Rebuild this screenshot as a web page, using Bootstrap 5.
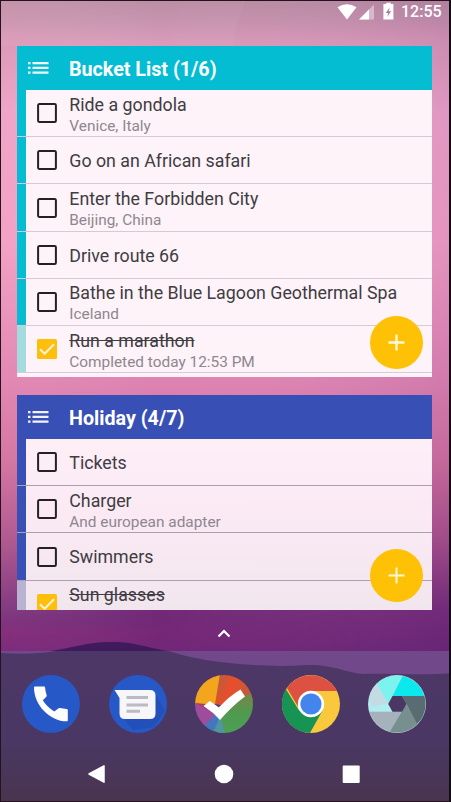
<!DOCTYPE html>
<html lang="en">
<head>
<meta charset="utf-8">
<meta name="viewport" content="width=device-width, initial-scale=1">
<title>Home screen</title>
<link href="https://cdn.jsdelivr.net/npm/bootstrap@5.3.0/dist/css/bootstrap.min.css" rel="stylesheet">
<style>
body{font-family:Roboto,sans-serif;background:#000;overflow:hidden}
.phone{width:451px;height:802px}
.wallpaper{position:absolute;inset:0}
.status{height:22px;padding:2px 10px 0 0;font-size:16px;font-weight:500;line-height:20px}
.status .clock{width:40px;text-align:right;white-space:nowrap}
.todo{margin:0 19px 0 17px;overflow:hidden}
.todo-bucket{margin-top:24px;height:331px;--tone:#04bdd3;--faded:#a3dbdf;--rule:#d9c9d6;background:#fef3f8}
.todo-holiday{margin-top:18px;height:215px;--tone:#3850b5;--faded:#b7b3d1;--rule:#aaa0ae;background:linear-gradient(#feeff7 45px,#fbeaf4 110px,#f2e6ee 215px)}
.todo-head{height:44px;background:var(--tone);padding-left:11px;color:#fff}
.todo-head h2{font-size:19.7px;font-weight:700;margin:3px 0 0 20px;line-height:24px;white-space:nowrap}
.todo-row{height:47.25px;border-bottom:1px solid var(--rule)}
.todo-head + .todo-row{height:47px}
.stripe{width:8.6px;background:var(--tone)}
.is-done .stripe{background:var(--faded)}
.tick{width:20px;height:20px;margin:.4px 12px 0 11.7px}
.label{font-size:17.8px;line-height:23px;color:#403c43;white-space:nowrap;margin-top:1px}
.note{font-size:15.4px;line-height:21px;color:#8f868f;white-space:nowrap}
.two-line{padding-top:2px}
.fab{position:absolute;right:9px;bottom:8px;width:53px;height:53px;background:#ffc105}
.drawer{margin-top:19px;height:11px}
.dock{margin-top:35px;padding:0 25px 0 22px}
.navkeys{margin-top:31px;padding:0 90px 0 87px}
</style>
<script src="https://cdn.jsdelivr.net/npm/bootstrap@5.3.0/dist/js/bootstrap.bundle.min.js"></script>
</head>
<body>
<main class="phone position-relative overflow-hidden">
<svg class="wallpaper" width="451" height="802" viewBox="0 0 451 802">
  <defs>
    <linearGradient id="sky" x2="0" y2="1">
      <stop offset="0" stop-color="#b98aa2"/><stop offset=".025" stop-color="#c48fab"/><stop offset=".05" stop-color="#d796b6"/><stop offset=".14" stop-color="#eda3c8"/><stop offset=".3" stop-color="#f29fc5"/>
      <stop offset=".47" stop-color="#de83b2"/><stop offset=".57" stop-color="#d0709f"/><stop offset=".67" stop-color="#a84f8b"/><stop offset=".76" stop-color="#732a78"/><stop offset=".812" stop-color="#6a2375"/><stop offset="1" stop-color="#592370"/>
    </linearGradient>
    <linearGradient id="side" x2="1" y2="0"><stop offset="0" stop-color="#ffb3c0" stop-opacity=".12"/><stop offset=".35" stop-color="#fff" stop-opacity="0"/><stop offset="1" stop-color="#642a80" stop-opacity=".1"/></linearGradient>
    <linearGradient id="glow" x2="0" y2="1"><stop offset="0" stop-color="#6f2a77" stop-opacity="0"/><stop offset=".5" stop-color="#8a2a78" stop-opacity=".55"/><stop offset="1" stop-color="#7c2b7c" stop-opacity=".8"/></linearGradient>
    <linearGradient id="dusk" x2="0" y2="1"><stop offset="0" stop-color="#4d3767"/><stop offset=".6" stop-color="#4a3763"/><stop offset="1" stop-color="#49354f"/></linearGradient>
    <linearGradient id="fade" x2="1" y2="0"><stop offset="0" stop-color="#fff"/><stop offset=".8" stop-color="#fff" stop-opacity="0"/></linearGradient>
    <mask id="leftside"><rect width="451" height="802" fill="url(#fade)"/></mask>
  </defs>
  <rect width="451" height="802" fill="url(#sky)"/>
  <rect width="451" height="802" fill="url(#side)"/>
  <path d="M0 0H246Q236 22 233 46H0Z" fill="#fff" opacity=".04"/>
  <rect y="611" width="451" height="40" fill="url(#glow)" mask="url(#leftside)"/>
  <path d="M50 651C75 648 85 642 112 642C136 642 147 648 168 651Z" fill="#3f1b5c"/>
  <rect y="651" width="451" height="151" fill="url(#dusk)"/>
  <path d="M0 651H55Q35 655 0 653Z" fill="#71488a"/>
  <path d="M168 651H451V673C422 676 395 673 364 674C342 672 333 664 306 665C265 668 215 663 186 656Z" fill="#71488a"/>
  <path d="M0 .5H451M.5 0V802M0 801.5H451" stroke="#26121d"/>
  <path d="M450 0V802" stroke="#120c14" stroke-width="2"/>
</svg>
<div class="position-relative d-flex flex-column">
  <header class="status d-flex justify-content-end align-items-center text-white">
    <svg width="60" height="22" viewBox="337 0 60 22" fill="#fff">
      <path d="M337.5 6.2Q347 0.5 356.5 6.2L347 18.5Z"/>
      <path d="M374 3.5V18.5H359Z" opacity=".4"/><path d="M369 8.5V18.5H359Z"/>
      <path d="M386.2 3V1.8H390.8V3H393.4V18.6H383.4V3Z"/><path d="M389.8 6.3L385.7 12H388.2L387.2 16L391.2 10.2H388.7Z" fill="#aa819a"/>
    </svg>
    <span class="clock ms-1">12:55</span>
  </header>

  <section class="todo todo-bucket position-relative">
    <div class="todo-head d-flex align-items-center">
      <svg width="21" height="14" viewBox="0 0 21 14" fill="#fff" fill-opacity=".93"><path d="M0 1h2.5v2.3H0zM0 5.7h2.5V8H0zM0 10.4h2.5v2.3H0zM4.5 1h16v2.3h-16zM4.5 5.7h16V8h-16zM4.5 10.4h16v2.3h-16z"/></svg>
      <h2>Bucket List (1/6)</h2>
    </div>
    <div class="todo-row d-flex align-items-center"><span class="stripe align-self-stretch"></span><svg class="tick" viewBox="0 0 20 20"><rect x="1.1" y="1.1" width="17.8" height="17.8" rx="1.2" fill="none" stroke="#242126" stroke-width="2"/></svg><div class="two-line"><div class="label">Ride a gondola</div><div class="note">Venice, Italy</div></div></div>
    <div class="todo-row d-flex align-items-center"><span class="stripe align-self-stretch"></span><svg class="tick" viewBox="0 0 20 20"><rect x="1.1" y="1.1" width="17.8" height="17.8" rx="1.2" fill="none" stroke="#242126" stroke-width="2"/></svg><div class="label">Go on an African safari</div></div>
    <div class="todo-row d-flex align-items-center"><span class="stripe align-self-stretch"></span><svg class="tick" viewBox="0 0 20 20"><rect x="1.1" y="1.1" width="17.8" height="17.8" rx="1.2" fill="none" stroke="#242126" stroke-width="2"/></svg><div class="two-line"><div class="label">Enter the Forbidden City</div><div class="note">Beijing, China</div></div></div>
    <div class="todo-row d-flex align-items-center"><span class="stripe align-self-stretch"></span><svg class="tick" viewBox="0 0 20 20"><rect x="1.1" y="1.1" width="17.8" height="17.8" rx="1.2" fill="none" stroke="#242126" stroke-width="2"/></svg><div class="label">Drive route 66</div></div>
    <div class="todo-row d-flex align-items-center"><span class="stripe align-self-stretch"></span><svg class="tick" viewBox="0 0 20 20"><rect x="1.1" y="1.1" width="17.8" height="17.8" rx="1.2" fill="none" stroke="#242126" stroke-width="2"/></svg><div class="two-line"><div class="label">Bathe in the Blue Lagoon Geothermal Spa</div><div class="note">Iceland</div></div></div>
    <div class="todo-row is-done d-flex align-items-center"><span class="stripe align-self-stretch"></span><svg class="tick" viewBox="0 0 20 20"><rect width="20" height="20" rx="1.5" fill="#fdbf0c"/><path d="M3 10.3L7.6 14.8L17 5.3" fill="none" stroke="#fff3d5" stroke-width="2"/></svg><div class="two-line"><div class="label text-decoration-line-through">Run a marathon</div><div class="note">Completed today 12:53 PM</div></div></div>
    <div class="fab rounded-circle d-flex align-items-center justify-content-center"><svg width="17" height="17" viewBox="0 0 17 17"><path d="M8.5.5v16M.5 8.5h16" stroke="#fff9dc" stroke-width="2.3"/></svg></div>
  </section>

  <section class="todo todo-holiday position-relative">
    <div class="todo-head d-flex align-items-center">
      <svg width="21" height="14" viewBox="0 0 21 14" fill="#fff" fill-opacity=".93"><path d="M0 1h2.5v2.3H0zM0 5.7h2.5V8H0zM0 10.4h2.5v2.3H0zM4.5 1h16v2.3h-16zM4.5 5.7h16V8h-16zM4.5 10.4h16v2.3h-16z"/></svg>
      <h2>Holiday (4/7)</h2>
    </div>
    <div class="todo-row d-flex align-items-center"><span class="stripe align-self-stretch"></span><svg class="tick" viewBox="0 0 20 20"><rect x="1.1" y="1.1" width="17.8" height="17.8" rx="1.2" fill="none" stroke="#242126" stroke-width="2"/></svg><div class="label">Tickets</div></div>
    <div class="todo-row d-flex align-items-center"><span class="stripe align-self-stretch"></span><svg class="tick" viewBox="0 0 20 20"><rect x="1.1" y="1.1" width="17.8" height="17.8" rx="1.2" fill="none" stroke="#242126" stroke-width="2"/></svg><div class="two-line"><div class="label">Charger</div><div class="note">And european adapter</div></div></div>
    <div class="todo-row d-flex align-items-center"><span class="stripe align-self-stretch"></span><svg class="tick" viewBox="0 0 20 20"><rect x="1.1" y="1.1" width="17.8" height="17.8" rx="1.2" fill="none" stroke="#242126" stroke-width="2"/></svg><div class="label">Swimmers</div></div>
    <div class="todo-row is-done d-flex align-items-center"><span class="stripe align-self-stretch"></span><svg class="tick" viewBox="0 0 20 20"><rect width="20" height="20" rx="1.5" fill="#fdbf0c"/><path d="M3 10.3L7.6 14.8L17 5.3" fill="none" stroke="#fff3d5" stroke-width="2"/></svg><div class="two-line"><div class="label text-decoration-line-through">Sun glasses</div><div class="note">&nbsp;</div></div></div>
    <div class="fab rounded-circle d-flex align-items-center justify-content-center"><svg width="17" height="17" viewBox="0 0 17 17"><path d="M8.5.5v16M.5 8.5h16" stroke="#fff9dc" stroke-width="2"/></svg></div>
  </section>

  <div class="drawer d-flex justify-content-center"><svg width="14" height="9" viewBox="0 0 14 9" class="me-1"><path d="M1.5 7.5L7 2L12.5 7.5" fill="none" stroke="#fff" stroke-width="2.2"/></svg></div>

  <nav class="dock d-flex justify-content-between align-items-center">
    <svg width="58" height="58" viewBox="0 0 58 58"><circle cx="29" cy="29" r="29" fill="#2758c7"/><path d="M12 12.4Q12 11.4 13 11.4H22Q23 11.4 23.1 12.4Q23.2 16 24.6 20Q25 21 24.3 21.7L20.8 25.2Q24.3 31.2 32.3 36.6L36.3 33.4Q37 32.8 38 33.1Q41 33.8 44.7 34Q45.8 34 45.8 35V45.2Q45.8 46.3 44.8 46.3C28 46.3 12 30.2 12 12.4Z" fill="#fff"/></svg>
    <svg width="58" height="58" viewBox="0 0 58 58"><circle cx="29" cy="29" r="29" fill="#2758c7"/><path d="M14 43L24 55L45 52L56 36L46 19Z" fill="#173b96" opacity=".3"/><path d="M5.5 15H41Q46.5 15 46.5 20.5V38.5Q46.5 44 41 44H16Q10.5 44 10.5 38.5V23Z" fill="#f7f6fa"/><path d="M17.5 22.5H39M17.5 30H39M17.5 36.2H31" stroke="#bcbac3" stroke-width="3"/></svg>
    <svg width="58" height="58" viewBox="0 0 58 58"><defs><clipPath id="disc"><circle cx="29" cy="29" r="29"/></clipPath><linearGradient id="red" x2="1" y2=".4"><stop offset="0" stop-color="#ad623e"/><stop offset=".5" stop-color="#eb4d2c"/><stop offset="1" stop-color="#b5603c"/></linearGradient><linearGradient id="leaf" x2="0" y2="1"><stop offset="0" stop-color="#7c8348"/><stop offset=".5" stop-color="#4f9a50"/><stop offset="1" stop-color="#4d9f55"/></linearGradient></defs><g clip-path="url(#disc)"><path d="M24 29L25 0H-1V29Z" fill="#f3a51d"/><path d="M20 29L25-1H60V26L30 31Z" fill="url(#red)"/><path d="M24 31L60 17V60H22Z" fill="url(#leaf)"/><path d="M24 33L30 60H8L20 38Z" fill="#4f96a0"/><path d="M0 28L26 35L8 60H-2Z" fill="#9d4d9b"/><path d="M22 38L6 54L17 60L24 44Z" fill="#4376bd"/><path d="M0 28L22 30L15 36Z" fill="#ad3e5f"/></g><path d="M8.5 31L14.8 26L24 32.5Q33 22 45.5 14.5L50 21.5Q37 31 25 45Q18 37 8.5 31Z" fill="#fff"/></svg>
    <svg width="58" height="58" viewBox="0 0 58 58"><circle cx="29" cy="29" r="29" fill="#f9c83c"/><path d="M5 13A29 29 0 0 1 54.9 16H29L18 35Z" fill="#dc5142"/><path d="M4 14.2A29 29 0 0 0 28 58L40.5 35.5H17Z" fill="#179454"/><path d="M29 16H54L56 19L41 27Z" fill="#f9c83c"/><circle cx="29" cy="29" r="13.2" fill="#fff"/><circle cx="29" cy="29" r="10.6" fill="#4385ed"/></svg>
    <svg width="58" height="58" viewBox="0 0 58 58"><defs><clipPath id="lens"><circle cx="29" cy="29" r="28.5"/></clipPath></defs><circle cx="29" cy="29" r="29" fill="#b4d6dc"/><g clip-path="url(#lens)"><path d="M36-2L60 0V21H24.5Z" fill="#0be8ee"/><path d="M6 5L36-2L20.2 28.6L9 10Z" fill="#7bf3ee"/><path d="M9 9L24.3 36.7H-2V15Z" fill="#aeeef0"/><path d="M9 9L20 28.5L4 32L0 18Z" fill="#c4dbe4"/><path d="M-2 36.7H33L21 60H-2Z" fill="#a5b2bc"/><path d="M38 29L51 50L38 60H20Z" fill="#77908f"/><path d="M34 21H60V40L49 48.5Z" fill="#586c72"/></g><path d="M24.5 21H34L38.5 29L34 36.7H24.5L20.2 29Z" fill="#4b3764"/></svg>
  </nav>

  <nav class="navkeys d-flex justify-content-between align-items-center">
    <svg width="19" height="20" viewBox="0 0 19 20"><path d="M2 10L17 1.8V18.2Z" fill="#fff" stroke="#fff" stroke-width="1.5" stroke-linejoin="round"/></svg>
    <svg width="20" height="20" viewBox="0 0 20 20"><circle cx="10" cy="10" r="9.3" fill="#fff"/></svg>
    <svg width="20" height="20" viewBox="0 0 20 20"><rect x="1.7" y="1.5" width="17" height="17.5" rx="1" fill="#fff"/></svg>
  </nav>
</div>
</main>
</body>
</html>
